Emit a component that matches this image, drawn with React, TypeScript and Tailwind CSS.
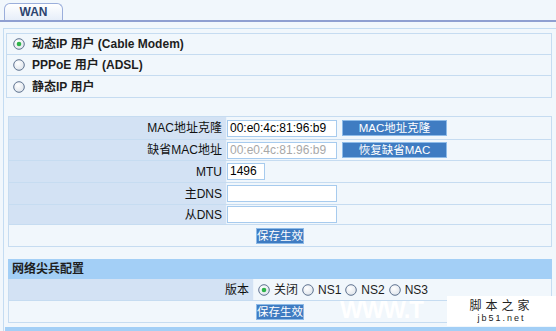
import React from 'react'

const font = { fontFamily: '"Liberation Sans", Arial, "Noto Sans CJK SC", sans-serif' }

const Radio = ({ checked = false }: { checked?: boolean }) => (
  <svg width="12" height="12" viewBox="0 0 12 12" className="shrink-0">
    <defs>
      <radialGradient id="rg" cx="40%" cy="35%" r="70%">
        <stop offset="0%" stopColor="#ffffff" />
        <stop offset="100%" stopColor="#dde3ea" />
      </radialGradient>
    </defs>
    <circle cx="6" cy="6" r="5.3" fill="url(#rg)" stroke="#5f7390" strokeWidth="1" />
    {checked && <circle cx="6" cy="6" r="2.3" fill="#2fb34a" />}
  </svg>
)

const Btn = ({ label, w }: { label: string; w: string }) => (
  <div className={`${w} h-[16px] bg-[#3f7cc2] border border-[#8ebbe8] text-white text-[11.5px] leading-[14px] whitespace-nowrap flex items-center justify-center`}>
    {label}
  </div>
)

const Field = ({ value = '', w, muted = false }: { value?: string; w: string; muted?: boolean }) => (
  <div className={`${w} h-[17px] bg-white border border-[#a7cbee] text-[12px] leading-[15px] px-[2px] whitespace-nowrap overflow-hidden ${muted ? 'text-[#a8a8a8]' : 'text-black'}`}>
    {value}
  </div>
)

const FormRow = ({ label, h, children }: { label: string; h: string; children: React.ReactNode }) => (
  <div className={`flex ${h} border-b border-[#c6dcf1]`}>
    <div className="w-[218px] shrink-0 bg-[#d3e2f4] border-r border-[#eaf3fb] flex items-center justify-end pr-[4px] text-[12px] text-[#111]">
      {label}
    </div>
    <div className="flex-1 flex items-center gap-[5px]">{children}</div>
  </div>
)

export default function App() {
  return (
    <div className="w-[556px] h-[331px] bg-[#f1f7fc] overflow-hidden relative" style={font}>
      {/* tab */}
      <div className="pl-[4px] pt-[3px] flex">
        <div className="w-[59px] h-[17px] rounded-t-[6px] border border-b-0 border-[#9aaedb] bg-gradient-to-b from-white to-[#e6eef9] flex items-center justify-center text-[12px] font-bold text-[#2c4470]">
          WAN
        </div>
      </div>
      <div className="h-[2px] bg-[#8f9fd1]" />

      <div className="mt-[6px] ml-[3px] border-l border-t border-[#c4dcf2] h-[310px] flex flex-col">
        {/* connection type */}
        <div className="mt-[4px] ml-[2px] w-[546px] border border-[#c6dcf1] flex flex-col text-[12px] font-bold text-[#1e1e1e]">
          {[
            ['动态IP 用户 (Cable Modem)', true],
            ['PPPoE 用户 (ADSL)', false],
            ['静态IP 用户', false],
          ].map(([t, c], i) => (
            <div key={i} className={`h-[21px] flex items-center gap-[7px] pl-[6px] ${i < 2 ? 'border-b border-[#c6dcf1]' : ''}`}>
              <Radio checked={c as boolean} />
              <span>{t as string}</span>
            </div>
          ))}
        </div>

        {/* mac / mtu / dns */}
        <div className="mt-[18px] ml-[4px] w-[544px] border border-[#c6dcf1] flex flex-col">
          <FormRow label="MAC地址克隆" h="h-[23px]">
            <Field value="00:e0:4c:81:96:b9" w="w-[110px]" />
            <Btn label="MAC地址克隆" w="w-[105px]" />
          </FormRow>
          <FormRow label="缺省MAC地址" h="h-[21px]">
            <Field value="00:e0:4c:81:96:b9" w="w-[110px]" muted />
            <Btn label="恢复缺省MAC" w="w-[105px]" />
          </FormRow>
          <FormRow label="MTU" h="h-[22px]">
            <Field value="1496" w="w-[38px]" />
          </FormRow>
          <FormRow label="主DNS" h="h-[22px]">
            <Field w="w-[110px]" />
          </FormRow>
          <FormRow label="从DNS" h="h-[20px]">
            <Field w="w-[110px]" />
          </FormRow>
          <div className="h-[21px] flex items-center justify-center">
            <Btn label="保存生效" w="w-[48px]" />
          </div>
        </div>

        {/* ns section */}
        <div className="mt-[12px] ml-[4px] w-[544px] flex flex-col">
          <div className="h-[20px] bg-[#a3cff6] flex items-center pl-[4px] text-[12px] font-bold text-[#1e1e1e]">
            网络尖兵配置
          </div>
          <div className="border border-t-0 border-[#c6dcf1] flex flex-col">
            <div className="h-[22px] flex border-b border-[#c6dcf1]">
              <div className="w-[245px] shrink-0 bg-[#d3e2f4] border-r border-[#eaf3fb] flex items-center justify-end pr-[4px] text-[12px] text-[#111]">
                版本
              </div>
              <div className="flex items-center gap-[4px] pl-[4px] text-[12px] text-[#1e1e1e]">
                <Radio checked />
                <span>关闭</span>
                <Radio />
                <span>NS1</span>
                <Radio />
                <span>NS2</span>
                <Radio />
                <span>NS3</span>
              </div>
            </div>
            <div className="h-[21px] flex items-center justify-center">
              <Btn label="保存生效" w="w-[48px]" />
            </div>
          </div>
        </div>

        <div className="mt-[4px] ml-[1px] h-[6px] bg-[#a3cff6]" />
      </div>

      {/* watermark */}
      <div className="absolute left-[340px] top-[299px] text-[24px] font-black text-white tracking-[-1px] leading-[22px]">
        WWW.T
      </div>
      <div className="absolute left-[447px] top-[296px] w-[109px] h-[30px] bg-white flex flex-col items-center justify-center text-[#222]">
        <span className="text-[12px] leading-[13px] tracking-[4px]">脚本之家</span>
        <span className="text-[9px] leading-[10px] tracking-[2px]">jb51.net</span>
      </div>
    </div>
  )
}
